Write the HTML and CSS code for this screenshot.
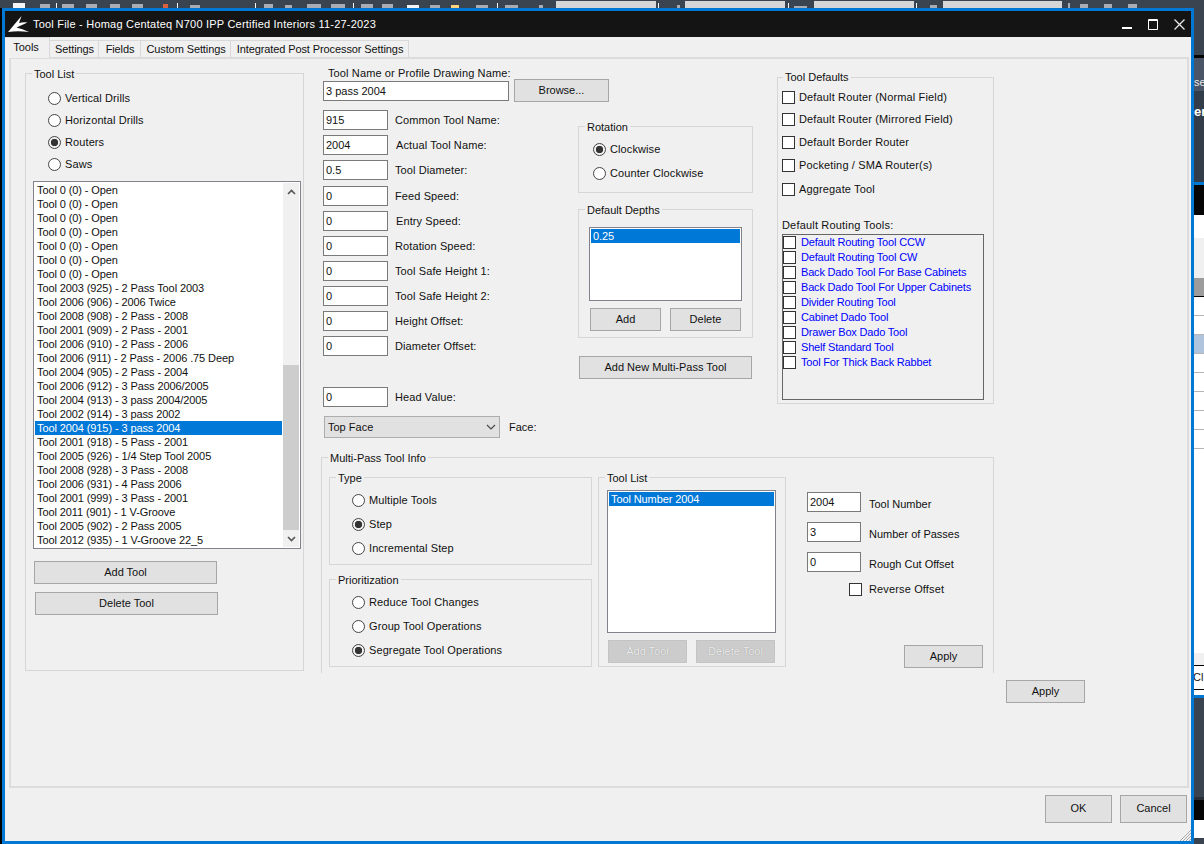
FILE: index.html
```html
<!DOCTYPE html>
<html lang="en">
<head>
<meta charset="utf-8">
<title>Tool File</title>
<link rel="stylesheet" href="styles.css">
</head>
<body>
<div class="desk">
  <svg class="desk-top" width="1204" height="8" viewBox="0 0 1204 8">
    <rect class="w" x="13" y="3" width="12" height="5"/><rect class="g" x="40" y="4" width="10" height="4"/><rect class="w" x="56" y="3" width="1" height="5"/>
    <rect class="g" x="62" y="4" width="12" height="4"/><rect class="g" x="86" y="4" width="11" height="4"/><rect class="g" x="110" y="4" width="10" height="4"/><rect class="g" x="132" y="4" width="11" height="4"/><rect class="r" x="163" y="4" width="5" height="4"/><rect class="w" x="177" y="3" width="1" height="5"/>
    <rect class="g" x="190" y="5" width="10" height="3"/><rect class="w" x="255" y="3" width="1" height="5"/><rect class="g" x="264" y="4" width="9" height="4"/><rect class="g" x="285" y="5" width="7" height="3"/><rect class="g" x="307" y="4" width="14" height="4"/><rect class="g" x="331" y="4" width="14" height="4"/><rect class="w" x="353" y="3" width="1" height="5"/>
    <rect class="g" x="361" y="4" width="12" height="4"/><rect class="g" x="382" y="4" width="11" height="4"/><rect class="w" x="407" y="5" width="12" height="3"/><rect class="g" x="430" y="5" width="10" height="3"/><rect class="y" x="451" y="5" width="8" height="3"/><rect class="g" x="476" y="5" width="12" height="3"/><rect class="w" x="497" y="3" width="1" height="5"/><rect class="g" x="505" y="5" width="13" height="3"/><rect class="g" x="539" y="5" width="4" height="3"/>
    <rect class="c" x="556" y="1" width="100" height="7"/><rect class="w" x="658" y="3" width="1" height="5"/><rect class="g" x="677" y="5" width="3" height="3"/>
    <rect class="c" x="685" y="1" width="100" height="7"/><rect class="w" x="788" y="3" width="1" height="5"/><rect class="g" x="794" y="6" width="13" height="2"/>
    <rect class="c" x="814" y="1" width="100" height="7"/><rect class="w" x="916" y="3" width="1" height="5"/><rect class="g" x="930" y="5" width="7" height="3"/>
    <rect class="c" x="943" y="1" width="119" height="7"/><rect class="g" x="1068" y="3" width="2" height="5"/><rect class="g" x="1080" y="4" width="8" height="4"/><rect class="g" x="1104" y="4" width="8" height="4"/><rect class="g" x="1128" y="4" width="9" height="4"/>
  </svg>
  <div class="desk-side">
    <div class="s-tool"></div><div class="s-black s-h3"></div>
    <div class="s-panel"><span class="s-se">se</span></div>
    <div class="s-cells"><span class="s-er">er</span></div>
    <div class="s-blue"></div><div class="s-black s-h30"></div>
    <div class="s-white s-h23"></div><div class="s-grey s-h40"></div>
    <div class="s-head"></div>
    <div class="s-row"></div><div class="s-row"></div><div class="s-row s-sel"></div><div class="s-row"></div><div class="s-row"></div><div class="s-row"></div><div class="s-row"></div><div class="s-row"></div>
    <div class="s-white s-h204"></div><div class="s-grey s-h12"></div>
    <div class="s-cl">Cl</div><div class="s-white s-h5"></div><div class="s-blue"></div>
    <div class="s-dark"></div><div class="s-black s-h20"></div><div class="s-white s-h18"></div>
  </div>

  <div class="window">
    <header class="titlebar">
      <svg class="logo" width="22" height="18" viewBox="0 0 22 18"><path d="M13.5 0 L0 16 Q10 14.5 21 16 Q14 12.5 8.5 11.5 L19.5 6.5 Q15 6 11 7 Z" fill="#fff"/></svg>
      <span class="title">Tool File - Homag Centateq N700 IPP Certified Interiors 11-27-2023</span>
      <div class="winbtns">
        <span class="winbtn"><svg width="11" height="11" viewBox="0 0 11 11"><rect x="0" y="8" width="10" height="2" fill="#fff"/></svg></span>
        <span class="winbtn"><svg width="11" height="11" viewBox="0 0 11 11"><path d="M.5 .5h9v10h-9z M0 1.5h10" fill="none" stroke="#fff"/></svg></span>
        <span class="winbtn"><svg width="11" height="11" viewBox="0 0 11 11"><path d="M.5 .5L10.5 10.5M10.5 .5L.5 10.5" fill="none" stroke="#e8e8e8" stroke-width="1.3"/></svg></span>
      </div>
    </header>
    <nav class="tabs">
      <span class="tab tab-active">Tools</span>
      <span class="tab tab-settings">Settings</span>
      <span class="tab tab-fields">Fields</span>
      <span class="tab tab-custom">Custom Settings</span>
      <span class="tab tab-post">Integrated Post Processor Settings</span>
    </nav>
    <main class="panel">
      <div class="main">
        <section class="group toollist">
          <div class="legend">Tool List</div>
          <div class="radios radios-22">
            <label class="rad"><i class="radio"></i>Vertical Drills</label>
            <label class="rad"><i class="radio"></i>Horizontal Drills</label>
            <label class="rad"><i class="radio on"></i>Routers</label>
            <label class="rad"><i class="radio"></i>Saws</label>
          </div>
          <div class="listbox tools-list">
            <div class="items">
              <div>Tool 0 (0) - Open</div><div>Tool 0 (0) - Open</div><div>Tool 0 (0) - Open</div><div>Tool 0 (0) - Open</div><div>Tool 0 (0) - Open</div><div>Tool 0 (0) - Open</div><div>Tool 0 (0) - Open</div>
              <div>Tool 2003 (925) - 2 Pass Tool 2003</div>
              <div>Tool 2006 (906) - 2006 Twice</div>
              <div>Tool 2008 (908) - 2 Pass - 2008</div>
              <div>Tool 2001 (909) - 2 Pass - 2001</div>
              <div>Tool 2006 (910) - 2 Pass - 2006</div>
              <div>Tool 2006 (911) - 2 Pass - 2006 .75 Deep</div>
              <div>Tool 2004 (905) - 2 Pass - 2004</div>
              <div>Tool 2006 (912) - 3 Pass 2006/2005</div>
              <div>Tool 2004 (913) - 3 pass 2004/2005</div>
              <div>Tool 2002 (914) - 3 pass 2002</div>
              <div class="sel">Tool 2004 (915) - 3 pass 2004</div>
              <div>Tool 2001 (918) - 5 Pass - 2001</div>
              <div>Tool 2005 (926) - 1/4 Step Tool 2005</div>
              <div>Tool 2008 (928) - 3 Pass - 2008</div>
              <div>Tool 2006 (931) - 4 Pass 2006</div>
              <div>Tool 2001 (999) - 3 Pass - 2001</div>
              <div>Tool 2011 (901) - 1 V-Groove</div>
              <div>Tool 2005 (902) - 2 Pass 2005</div>
              <div>Tool 2012 (935) - 1 V-Groove 22_5</div>
            </div>
            <div class="scrollbar">
              <span class="sb-arrow"><svg width="9" height="6" viewBox="0 0 9 6"><path d="M1 5L4.5 1.5L8 5" fill="none" stroke="#555" stroke-width="1.6"/></svg></span>
              <span class="sb-track"></span>
              <span class="sb-thumb"></span>
              <span class="sb-arrow"><svg width="9" height="6" viewBox="0 0 9 6"><path d="M1 1L4.5 4.5L8 1" fill="none" stroke="#555" stroke-width="1.6"/></svg></span>
            </div>
          </div>
          <button class="btn btn-addtool">Add Tool</button>
          <button class="btn btn-deltool">Delete Tool</button>
        </section>

        <div class="work">
          <div class="upper">
            <div class="col-a">
              <div class="name-label">Tool Name or Profile Drawing Name:</div>
              <div class="name-row">
                <div class="input input-name">3 pass 2004</div>
                <button class="btn btn-browse">Browse...</button>
              </div>
              <div class="cols">
                <div class="fields">
                  <div class="field"><div class="input">915</div><span>Common Tool Name:</span></div>
                  <div class="field"><div class="input">2004</div><span class="nudge">Actual Tool Name:</span></div>
                  <div class="field field-26"><div class="input">0.5</div><span>Tool Diameter:</span></div>
                  <div class="field"><div class="input">0</div><span>Feed Speed:</span></div>
                  <div class="field"><div class="input">0</div><span class="nudge">Entry Speed:</span></div>
                  <div class="field"><div class="input">0</div><span>Rotation Speed:</span></div>
                  <div class="field"><div class="input">0</div><span>Tool Safe Height 1:</span></div>
                  <div class="field"><div class="input">0</div><span>Tool Safe Height 2:</span></div>
                  <div class="field"><div class="input">0</div><span>Height Offset:</span></div>
                  <div class="field"><div class="input">0</div><span>Diameter Offset:</span></div>
                  <div class="field field-head"><div class="input">0</div><span>Head Value:</span></div>
                  <div class="face-row">
                    <div class="select">Top Face<svg width="10" height="6" viewBox="0 0 10 6"><path d="M1 1L5 5L9 1" fill="none" stroke="#444" stroke-width="1.1"/></svg></div>
                    <span>Face:</span>
                  </div>
                </div>
                <div class="col-rot">
                  <section class="group rotation">
                    <div class="legend">Rotation</div>
                    <div class="radios radios-24">
                      <label class="rad"><i class="radio on"></i>Clockwise</label>
                      <label class="rad"><i class="radio"></i>Counter Clockwise</label>
                    </div>
                  </section>
                  <section class="group depths">
                    <div class="legend">Default Depths</div>
                    <div class="listbox depth-list"><div class="items"><div class="sel">0.25</div></div></div>
                    <div class="btn-row depth-btns">
                      <button class="btn btn-depth">Add</button>
                      <button class="btn btn-depth">Delete</button>
                    </div>
                  </section>
                  <button class="btn btn-multi">Add New Multi-Pass Tool</button>
                </div>
              </div>
            </div>
            <section class="group defaults">
              <div class="legend legend-tight">Tool Defaults</div>
              <div class="checks">
                <label class="chk"><i class="check"></i>Default Router (Normal Field)</label>
                <label class="chk chk-up"><i class="check"></i>Default Router (Mirrored Field)</label>
                <label class="chk"><i class="check"></i>Default Border Router</label>
                <label class="chk"><i class="check"></i>Pocketing / SMA Router(s)</label>
                <label class="chk chk-down"><i class="check"></i>Aggregate Tool</label>
              </div>
              <div class="routing-label">Default Routing Tools:</div>
              <div class="routing">
                <label class="rt"><i class="check"></i>Default Routing Tool CCW</label>
                <label class="rt"><i class="check"></i>Default Routing Tool CW</label>
                <label class="rt"><i class="check"></i>Back Dado Tool For Base Cabinets</label>
                <label class="rt"><i class="check"></i>Back Dado Tool For Upper Cabinets</label>
                <label class="rt"><i class="check"></i>Divider Routing Tool</label>
                <label class="rt"><i class="check"></i>Cabinet Dado Tool</label>
                <label class="rt"><i class="check"></i>Drawer Box Dado Tool</label>
                <label class="rt"><i class="check"></i>Shelf Standard Tool</label>
                <label class="rt"><i class="check"></i>Tool For Thick Back Rabbet</label>
              </div>
            </section>
          </div>

          <section class="group multi">
            <div class="legend">Multi-Pass Tool Info</div>
            <div class="multi-body">
              <div class="multi-left">
                <section class="group sub">
                  <div class="legend">Type</div>
                  <div class="radios radios-24 radios-deep">
                    <label class="rad"><i class="radio"></i>Multiple Tools</label>
                    <label class="rad"><i class="radio on"></i>Step</label>
                    <label class="rad"><i class="radio"></i>Incremental Step</label>
                  </div>
                </section>
                <section class="group sub sub-prio">
                  <div class="legend">Prioritization</div>
                  <div class="radios radios-24 radios-deep">
                    <label class="rad"><i class="radio"></i>Reduce Tool Changes</label>
                    <label class="rad"><i class="radio"></i>Group Tool Operations</label>
                    <label class="rad"><i class="radio on"></i>Segregate Tool Operations</label>
                  </div>
                </section>
              </div>
              <section class="group multi-list">
                <div class="legend">Tool List</div>
                <div class="listbox pass-list"><div class="items"><div class="sel">Tool Number 2004</div></div></div>
                <div class="btn-row pass-btns">
                  <button class="btn btn-off">Add Tool</button>
                  <button class="btn btn-off">Delete Tool</button>
                </div>
              </section>
              <div class="multi-right">
                <div class="mfield"><div class="input input-m">2004</div><span>Tool Number</span></div>
                <div class="mfield"><div class="input input-m">3</div><span>Number of Passes</span></div>
                <div class="mfield"><div class="input input-m">0</div><span>Rough Cut Offset</span></div>
                <label class="chk-rev"><i class="check"></i>Reverse Offset</label>
                <button class="btn btn-apply btn-apply-in">Apply</button>
              </div>
            </div>
          </section>
        </div>
      </div>
      <button class="btn btn-apply btn-apply-out">Apply</button>
    </main>
    <footer class="footer">
      <button class="btn btn-foot">OK</button>
      <button class="btn btn-foot">Cancel</button>
      <svg class="grip" width="12" height="12" viewBox="0 0 12 12"><path d="M12 1L1 12M12 4L4 12M12 7L7 12M12 10L10 12" stroke="#a8a8a8" fill="none"/></svg>
    </footer>
  </div>
</div>
</body>
</html>
```
FILE: styles.css
```css
* { box-sizing: border-box; }
html, body { margin: 0; padding: 0; }
body { width: 1204px; height: 844px; overflow: hidden; background: #3a4350; font: 11px/14px "Liberation Sans", Arial, sans-serif; color: #111; }
i { font-style: normal; display: block; flex: none; }

.desk { position: relative; width: 1204px; height: 844px; overflow: hidden; background: #000; display: flex; flex-direction: column; }
.desk-top { display: block; flex: none; background: #3a4350; }
.desk-top .w { fill: #f4f4f4; }
.desk-top .g { fill: #a9adb3; }
.desk-top .r { fill: #d9603f; }
.desk-top .y { fill: #fbd27c; }
.desk-top .c { fill: #d6d6d6; }

.desk-side { width: 10px; margin-left: auto; height: 836px; display: flex; flex-direction: column; background: #3a4350; overflow: hidden; }
.s-tool { height: 47px; flex: none; background: #3a4350; }
.s-black { background: #050505; flex: none; }
.s-h3 { height: 3px; }
.s-h30 { height: 30px; }
.s-h20 { height: 20px; }
.s-panel { height: 33px; flex: none; background: #4a5568; color: #e8e8e8; display: flex; align-items: flex-end; white-space: nowrap; }
.s-se { font-size: 11px; line-height: 14px; margin-bottom: 2px; }
.s-cells { height: 91px; flex: none; background: #333c49; color: #fff; font-weight: bold; font-size: 13px; line-height: 16px; padding-top: 13px; white-space: nowrap; }
.s-blue { height: 3px; background: #0078d4; flex: none; }
.s-white { background: #fff; flex: none; }
.s-h23 { height: 23px; }
.s-h18 { height: 18px; }
.s-h5 { height: 5px; }
.s-h204 { height: 204px; }
.s-grey { background: #f0f0f0; flex: none; }
.s-h40 { height: 40px; }
.s-h12 { height: 12px; }
.s-head { height: 19px; flex: none; background: #9c9c9c; border-bottom: 1px solid #000; }
.s-row { height: 19px; flex: none; background: #fff; border-bottom: 1px solid #b5b5b5; }
.s-sel { background: #b0c4de; }
.s-cl { height: 25px; flex: none; background: #fff; border-top: 1px solid #000; border-bottom: 1px solid #000; margin-left: -1px; line-height: 23px; overflow: hidden; }
.s-dark { height: 102px; flex: none; background: #3a4350; border-bottom: 3px solid #2a2f38; }

.window { position: absolute; left: 2px; top: 8px; width: 1192px; height: 836px; border: 3px solid #0078d4; background: #f0f0f0; display: flex; flex-direction: column; }

.titlebar { height: 26px; flex: none; background: #141414; display: flex; align-items: center; color: #fff; }
.logo { margin-left: 3px; margin-top: 2px; flex: none; }
.title { margin-left: 3px; font-size: 11px; letter-spacing: 0.21px; }
.winbtns { margin-left: auto; display: flex; margin-right: -1px; }
.winbtn { width: 26px; display: flex; justify-content: center; }

.tabs { height: 20px; flex: none; display: flex; align-items: flex-end; position: relative; z-index: 1; letter-spacing: -0.1px; }
.tab { height: 17px; border: 1px solid #d9d9d9; border-width: 1px 1px 0 0; display: flex; align-items: center; justify-content: center; padding-left: 1px; white-space: nowrap; }
.tab-active { width: 45px; height: 21px; margin-bottom: -1px; background: #f0f0f0; padding: 0 2px 3px 0; letter-spacing: 0; }
.tab-settings { width: 49px; }
.tab-fields { width: 42px; }
.tab-custom { width: 90px; }
.tab-post { width: 178px; }

.panel { width: 1180px; height: 731px; flex: none; margin-left: 4px; border: 2px solid #dcdcdc; display: flex; flex-direction: column; align-items: flex-start; }
.main { display: flex; align-items: flex-start; }

.group { border: 1px solid #d6d6d6; flex: none; }
.legend { width: fit-content; margin: -7px 0 0 6px; padding: 0 2px; background: #f0f0f0; white-space: nowrap; height: 14px; }
.legend-tight { margin: -8px 0 1px 1px; }

.toollist { width: 279px; height: 598px; margin: 14px 0 0 14px; }
.radios { display: flex; flex-direction: column; }
.rad { display: flex; align-items: center; gap: 4px; letter-spacing: 0.1px; }
.radios-22 { padding: 6px 0 0 22px; }
.radios-22 .rad { height: 22px; }
.radios-24 { padding: 3px 0 0 14px; }
.radios-24 .rad { height: 24px; }
.radios-deep { padding-left: 22px; }
.radio { width: 13px; height: 13px; border: 1px solid #444; border-radius: 50%; background: #fff; }
.radio.on { background: radial-gradient(circle, #333 0 3.4px, #f0f0f0 4px); }
.check { width: 13px; height: 13px; border: 1px solid #333; background: #fff; }

.listbox { border: 1px solid #82828c; background: #fff; padding: 1px; display: flex; overflow: hidden; }
.items { flex: 1; min-width: 0; letter-spacing: -0.1px; }
.items div { height: 14px; padding-left: 2px; white-space: nowrap; }
.items .sel { background: #0078d7; color: #fff; }
.tools-list { width: 268px; height: 368px; margin: 6px 0 0 7px; }
.scrollbar { width: 16px; flex: none; margin-left: 1px; background: #f0f0f0; display: flex; flex-direction: column; }
.sb-arrow { height: 17px; flex: none; display: flex; align-items: center; justify-content: center; }
.sb-track { flex: 1; }
.sb-thumb { height: 165px; flex: none; background: #cdcdcd; }

.btn { display: block; flex: none; padding: 0 0 2px; margin: 0; border: 1px solid #a6a6a6; background: #e1e1e1; color: #111; font: inherit; height: 23px; }
.btn-addtool { width: 183px; margin: 12px 0 0 8px; }
.btn-deltool { width: 183px; margin: 8px 0 0 9px; }

.work { width: 673px; margin: 7px 0 0 17px; flex: none; }
.upper { height: 391px; display: flex; align-items: flex-start; }
.col-a { width: 456px; flex: none; padding-left: 2px; }
.name-label { height: 13px; padding-left: 5px; white-space: nowrap; letter-spacing: 0.12px; }
.name-row { display: flex; gap: 5px; }
.input { width: 65px; height: 20px; flex: none; border: 1px solid #7a7a7a; background: #fff; padding-left: 2px; line-height: 18px; white-space: nowrap; }
.input-name { width: 186px; margin-top: 2px; }
.btn-browse { width: 95px; }
.cols { display: flex; }
.fields { width: 255px; flex: none; padding-top: 8px; }
.field { height: 25px; display: flex; gap: 7px; white-space: nowrap; }
.field span { line-height: 20px; letter-spacing: 0.1px; }
.field .nudge { margin-left: 1px; }
.field-26 { height: 26px; }
.field-head { height: 29px; margin-top: 26px; }
.face-row { display: flex; gap: 9px; align-items: center; height: 22px; padding-left: 1px; }
.select { width: 176px; height: 22px; border: 1px solid #adadad; background: #e1e1e1; display: flex; align-items: center; justify-content: space-between; padding: 0 3px; }
.col-rot { width: 175px; flex: none; padding-top: 24px; }
.rotation { height: 67px; }
.depths { height: 129px; margin-top: 16px; }
.depth-list { width: 153px; height: 74px; margin: 10px 0 0 10px; }
.btn-row { display: flex; }
.depth-btns { gap: 9px; margin: 7px 0 0 11px; }
.btn-depth { width: 71px; }
.btn-multi { width: 173px; margin: 18px 0 0 1px; }

.defaults { width: 217px; height: 327px; margin-top: 11px; padding-left: 4px; }
.checks { display: flex; flex-direction: column; padding-top: 1px; }
.chk { display: flex; align-items: center; gap: 4px; height: 22px; margin-bottom: 1px; white-space: nowrap; letter-spacing: 0.15px; }
.chk-up { margin-top: -1px; }
.chk-down { margin-top: 1px; }
.routing-label { margin-top: 17px; height: 14px; white-space: nowrap; letter-spacing: 0.18px; }
.routing { width: 202px; height: 166px; margin-top: 2px; border: 1px solid #666; color: #0000ff; letter-spacing: -0.18px; }
.rt { display: flex; align-items: center; gap: 5px; height: 15px; padding-bottom: 1px; white-space: nowrap; }

.multi { height: 216px; border-bottom: 0; }
.multi-body { display: flex; align-items: flex-start; padding: 12px 0 0 7px; }
.multi-left { width: 263px; flex: none; }
.sub { height: 88px; }
.sub-prio { margin-top: 14px; }
.multi-list { width: 188px; height: 190px; margin-left: 6px; }
.pass-list { width: 169px; height: 143px; margin: 5px 0 0 8px; }
.pass-btns { gap: 9px; margin: 7px 0 0 9px; }
.btn-off { width: 79px; background: #cccccc; border-color: #c4c4c4; color: #ececec; text-shadow: 0 0 1px #8f8f8f; }
.multi-right { margin: 15px 0 0 21px; width: 180px; flex: none; }
.mfield { display: flex; gap: 8px; height: 30px; white-space: nowrap; }
.mfield span { line-height: 20px; padding-top: 2px; }
.input-m { width: 54px; }
.chk-rev { display: flex; align-items: center; gap: 7px; height: 14px; margin: 0 0 0 42px; white-space: nowrap; letter-spacing: 0.14px; }
.btn-apply { width: 79px; }
.btn-apply-in { margin: 49px 0 0 97px; }
.btn-apply-out { margin: 7px 0 0 995px; }

.footer { flex: 1; display: flex; justify-content: flex-end; gap: 8px; padding: 7px 4px 0 0; position: relative; }
.btn-foot { width: 67px; height: 28px; }
.grip { position: absolute; right: 0; bottom: 0; }
```
